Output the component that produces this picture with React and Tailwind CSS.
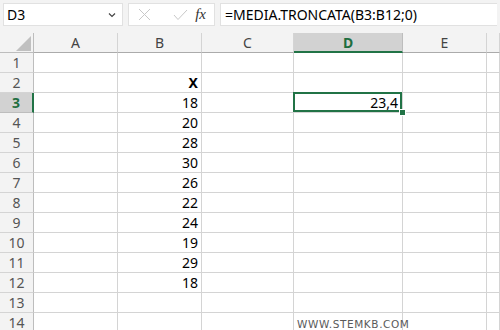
import React from "react";

const cols = ["A", "B", "C", "D", "E", "F"];
const bValues = { 2: "X", 3: "18", 4: "20", 5: "28", 6: "30", 7: "26", 8: "22", 9: "24", 10: "19", 11: "29", 12: "18" };

function Cell({ row, col }) {
  const base = "border-r border-b border-[#d4d4d4] bg-white h-[20px] px-[3px]";
  const txt = "text-[14px] leading-[19px] text-black";
  if (col === "B" && bValues[row]) {
    return (
      <div className={`${base} ${txt} text-right ${row === 2 ? "font-bold" : ""}`}>{bValues[row]}</div>
    );
  }
  if (col === "D" && row === 3) {
    return (
      <div className={`${base} ${txt} relative text-right`}>
        <div className="absolute -left-[1px] -top-[1px] right-0 bottom-0 border-2 border-[#217346]" />
        <div className="absolute -right-[4px] -bottom-[4px] w-[7px] h-[7px] bg-[#217346] border border-white" />
        <span className="relative pr-[1px]">23,4</span>
      </div>
    );
  }
  if (col === "D" && row === 14) {
    return (
      <div className={`${base} relative z-10 whitespace-nowrap text-[10.5px] leading-[22px] tracking-[0.6px] text-[#5a5a5a] font-['DejaVu_Sans',sans-serif]`}>
        WWW.STEMKB.COM
      </div>
    );
  }
  return <div className={base} />;
}

export default function App() {
  const rows = Array.from({ length: 14 }, (_, i) => i + 1);
  return (
    <div className="w-[500px] h-[330px] overflow-hidden bg-[#f3f3f3] font-['Noto_Sans','Open_Sans',sans-serif]">
      <div className="flex items-start gap-[5px] px-[3px] pt-[3px] h-[33px]">
        <div className="w-[120px] h-[23px] bg-white border border-[#e1e1e1] flex items-center justify-between pl-[3px] pr-[6px] text-[14px] text-black">
          <span>D3</span>
          <svg width="8" height="6" viewBox="0 0 8 6">
            <path d="M1 1.5 L4 4.5 L7 1.5" stroke="#444" strokeWidth="1.2" fill="none" />
          </svg>
        </div>
        <div className="w-[87px] h-[23px] bg-white border border-[#e1e1e1] flex items-center pl-[9px] pr-[8px]">
          <svg width="13" height="13" viewBox="0 0 13 13">
            <path d="M1 1 L12 12 M12 1 L1 12" stroke="#c8c8c8" strokeWidth="1" />
          </svg>
          <svg width="15" height="12" viewBox="0 0 15 12" className="ml-[22px]">
            <path d="M1 6 L5 10.5 L14 1" stroke="#c8c8c8" strokeWidth="1" fill="none" />
          </svg>
          <span className="ml-auto font-['Liberation_Serif',serif] italic text-[15px] text-[#333] leading-none">fx</span>
        </div>
        <div className="flex-1 h-[23px] bg-white border border-[#e1e1e1] border-r-0 flex items-center pl-[4px] text-[14px] text-black whitespace-nowrap">
          =MEDIA.TRONCATA(B3:B12;0)
        </div>
      </div>
      <div className="grid grid-cols-[34px_84px_84px_92px_109px_84px_1fr]">
        <div className="h-[20px] bg-[#f3f3f3] border-r border-b border-[#bdbdbd] relative">
          <svg width="15" height="15" viewBox="0 0 15 15" className="absolute right-[2px] bottom-[1px]">
            <path d="M15 0 L15 15 L0 15 Z" fill="#c0c0c0" />
          </svg>
        </div>
        {cols.map((c) =>
          c === "D" ? (
            <div
              key={c}
              className="h-[20px] bg-[#d2d2d2] border-r border-[#bdbdbd] border-b-2 border-b-[#217346] text-center text-[14px] leading-[19px] font-bold text-[#1e6e3f]"
            >
              {c}
            </div>
          ) : (
            <div
              key={c}
              className="h-[20px] bg-[#f3f3f3] border-r border-b border-[#d4d4d4] border-b-[#ababab] text-center text-[14px] leading-[19px] text-[#444]"
            >
              {c === "F" ? "" : c}
            </div>
          )
        )}
        {rows.map((r) => (
          <React.Fragment key={r}>
            {r === 3 ? (
              <div className="h-[20px] bg-[#d2d2d2] border-r-2 border-r-[#217346] border-b border-[#bdbdbd] text-center text-[14px] leading-[19px] font-bold text-[#1e6e3f]">
                {r}
              </div>
            ) : (
              <div className="h-[20px] bg-[#f3f3f3] border-r border-b border-[#bdbdbd] border-b-[#d4d4d4] text-center text-[14px] leading-[19px] text-[#555]">
                {r}
              </div>
            )}
            {cols.map((c) => (
              <Cell key={c} row={r} col={c} />
            ))}
          </React.Fragment>
        ))}
      </div>
    </div>
  );
}
